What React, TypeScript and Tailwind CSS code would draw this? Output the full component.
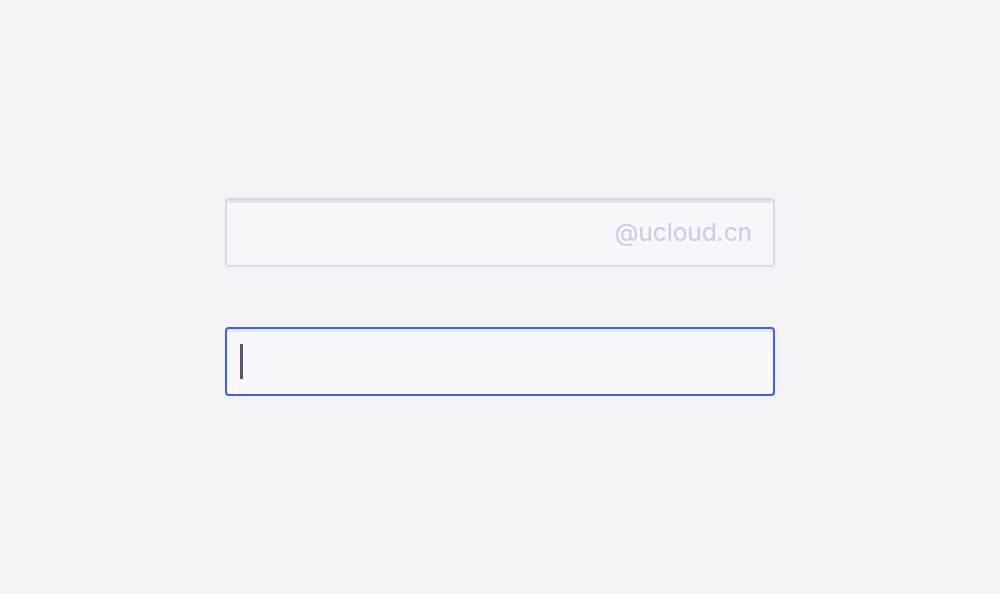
export default function App() {
  return (
    <div className="flex h-[594px] w-full items-center justify-center bg-[#f2f2f7] font-['Inter',sans-serif]">
      <div className="flex w-[550px] flex-col gap-[60px]">
        <div className="flex h-[69px] items-center justify-end rounded-[4px] border-2 border-[#d9dae7] bg-[#f7f7fc] pr-[21px] shadow-[inset_0_3px_0_#e3e4ef]">
          <span className="text-[24.4px] leading-none text-[#cbcde0]">@ucloud.cn</span>
        </div>
        <div className="flex h-[69px] items-center rounded-[4px] border-2 border-[#3b5efc] bg-[#f7f7fc] pl-[13px] shadow-[inset_0_3px_0_#e9e9f3]">
          <div className="h-[35px] w-[3px] bg-[#555770]" />
        </div>
      </div>
    </div>
  )
}
